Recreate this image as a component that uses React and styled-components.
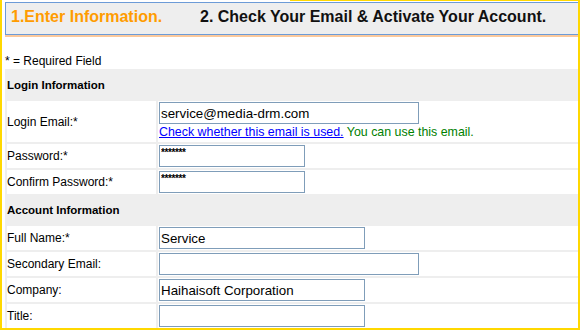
import styled, { createGlobalStyle } from "styled-components";

const GlobalStyle = createGlobalStyle`
    html, body {
        margin: 0;
        padding: 0;
        background: #fff;
    }
    body {
        font-family: "Liberation Sans", Arial, sans-serif;
        font-size: 12px;
        color: #000;
    }
`;

const Frame = styled.div`
    box-sizing: border-box;
    width: 580px;
    height: 330px;
    padding-left: 3px;
    border: 2px solid #ffd800;
    border-top: none;
    background: linear-gradient(to right, transparent 288px, #ffd800 288px) top / 100% 1px no-repeat;
    overflow: hidden;
`;

const StepBar = styled.div`
    display: flex;
    align-items: center;
    box-sizing: border-box;
    height: 33px;
    margin-top: 2px;
    padding: 0 0 3px 5px;
    background: #eeeeee;
    border: 1px solid #6c9bd7;
    border-right: none;
    box-shadow: 0 2px 0 #fcc99c;
`;

const Step = styled.div`
    flex: ${(p) => (p.$width ? `0 0 ${p.$width}px` : "1")};
    font-size: 16px;
    font-weight: bold;
    line-height: 28px;
    white-space: nowrap;
    color: ${(p) => (p.$active ? "#ff9c00" : "#111")};
`;

const Note = styled.p`
    margin: 19px 0 1px;
    line-height: 14px;
    font-size: 12px;
`;

const FormGrid = styled.div`
    display: grid;
    grid-template-columns: 149px 1fr;
    grid-template-rows: 28px 41px 24px 24px 28px 24px 24px 24px 24px;
    gap: 2px;
    padding: 2px 0 0 2px;
    background: #eeeeee;
`;

const SectionCell = styled.div`
    grid-column: 1 / -1;
    display: flex;
    align-items: center;
    font-size: 11.5px;
    font-weight: bold;
    background: #eeeeee;
`;

const LabelCell = styled.div`
    display: flex;
    align-items: center;
    background: #fff;
    font-size: 12px;
    white-space: nowrap;
`;

const FieldCell = styled.div`
    display: flex;
    flex-direction: ${(p) => (p.$stack ? "column" : "row")};
    align-items: ${(p) => (p.$stack ? "flex-start" : "center")};
    padding: ${(p) => (p.$stack ? "1px 0 0 1px" : "0 0 0 1px")};
    background: #fff;
`;

const TextBox = styled.input`
    box-sizing: border-box;
    width: ${(p) => p.$w}px;
    height: 22px;
    margin: 0;
    padding: 0 2px 0 1px;
    border: 1px solid #7f9db9;
    border-radius: 0;
    background: #fff;
    font-family: "Liberation Sans", Arial, sans-serif;
    font-size: 13.33px;
    color: #000;
    outline: none;
`;

const PasswordBox = styled(TextBox)`
    padding: 2px 2px 10px 1px;
    font-size: 10px;
    font-weight: bold;
    letter-spacing: -0.4px;
`;

const CheckLine = styled.div`
    margin-top: 1px;
    line-height: 14px;
    font-size: 12.4px;
    white-space: nowrap;
`;

const CheckLink = styled.a`
    color: #0000ff;
    text-decoration: underline;
    cursor: pointer;
`;

const OkNote = styled.span`
    color: #008000;
`;

const Field = ({ label, children, stack }) => (
    <>
        <LabelCell>{label}</LabelCell>
        <FieldCell $stack={stack}>{children}</FieldCell>
    </>
);

const App = () => {
    return (
        <>
            <GlobalStyle />
            <Frame>
                <StepBar>
                    <Step $active $width={189}>1.Enter Information.</Step>
                    <Step>2. Check Your Email &amp; Activate Your Account.</Step>
                </StepBar>
                <Note>* = Required Field</Note>
                <FormGrid>
                    <SectionCell>Login Information</SectionCell>
                    <Field label="Login Email:*" stack>
                        <TextBox $w={260} defaultValue="service@media-drm.com" />
                        <CheckLine>
                            <CheckLink>Check whether this email is used.</CheckLink>
                            <OkNote> You can use this email.</OkNote>
                        </CheckLine>
                    </Field>
                    <Field label="Password:*">
                        <PasswordBox $w={146} defaultValue="*******" />
                    </Field>
                    <Field label="Confirm Password:*">
                        <PasswordBox $w={146} defaultValue="*******" />
                    </Field>
                    <SectionCell>Account Information</SectionCell>
                    <Field label="Full Name:*">
                        <TextBox $w={206} defaultValue="Service" />
                    </Field>
                    <Field label="Secondary Email:">
                        <TextBox $w={260} defaultValue="" />
                    </Field>
                    <Field label="Company:">
                        <TextBox $w={206} defaultValue="Haihaisoft Corporation" />
                    </Field>
                    <Field label="Title:">
                        <TextBox $w={206} defaultValue="" />
                    </Field>
                </FormGrid>
            </Frame>
        </>
    );
};

export default App;
